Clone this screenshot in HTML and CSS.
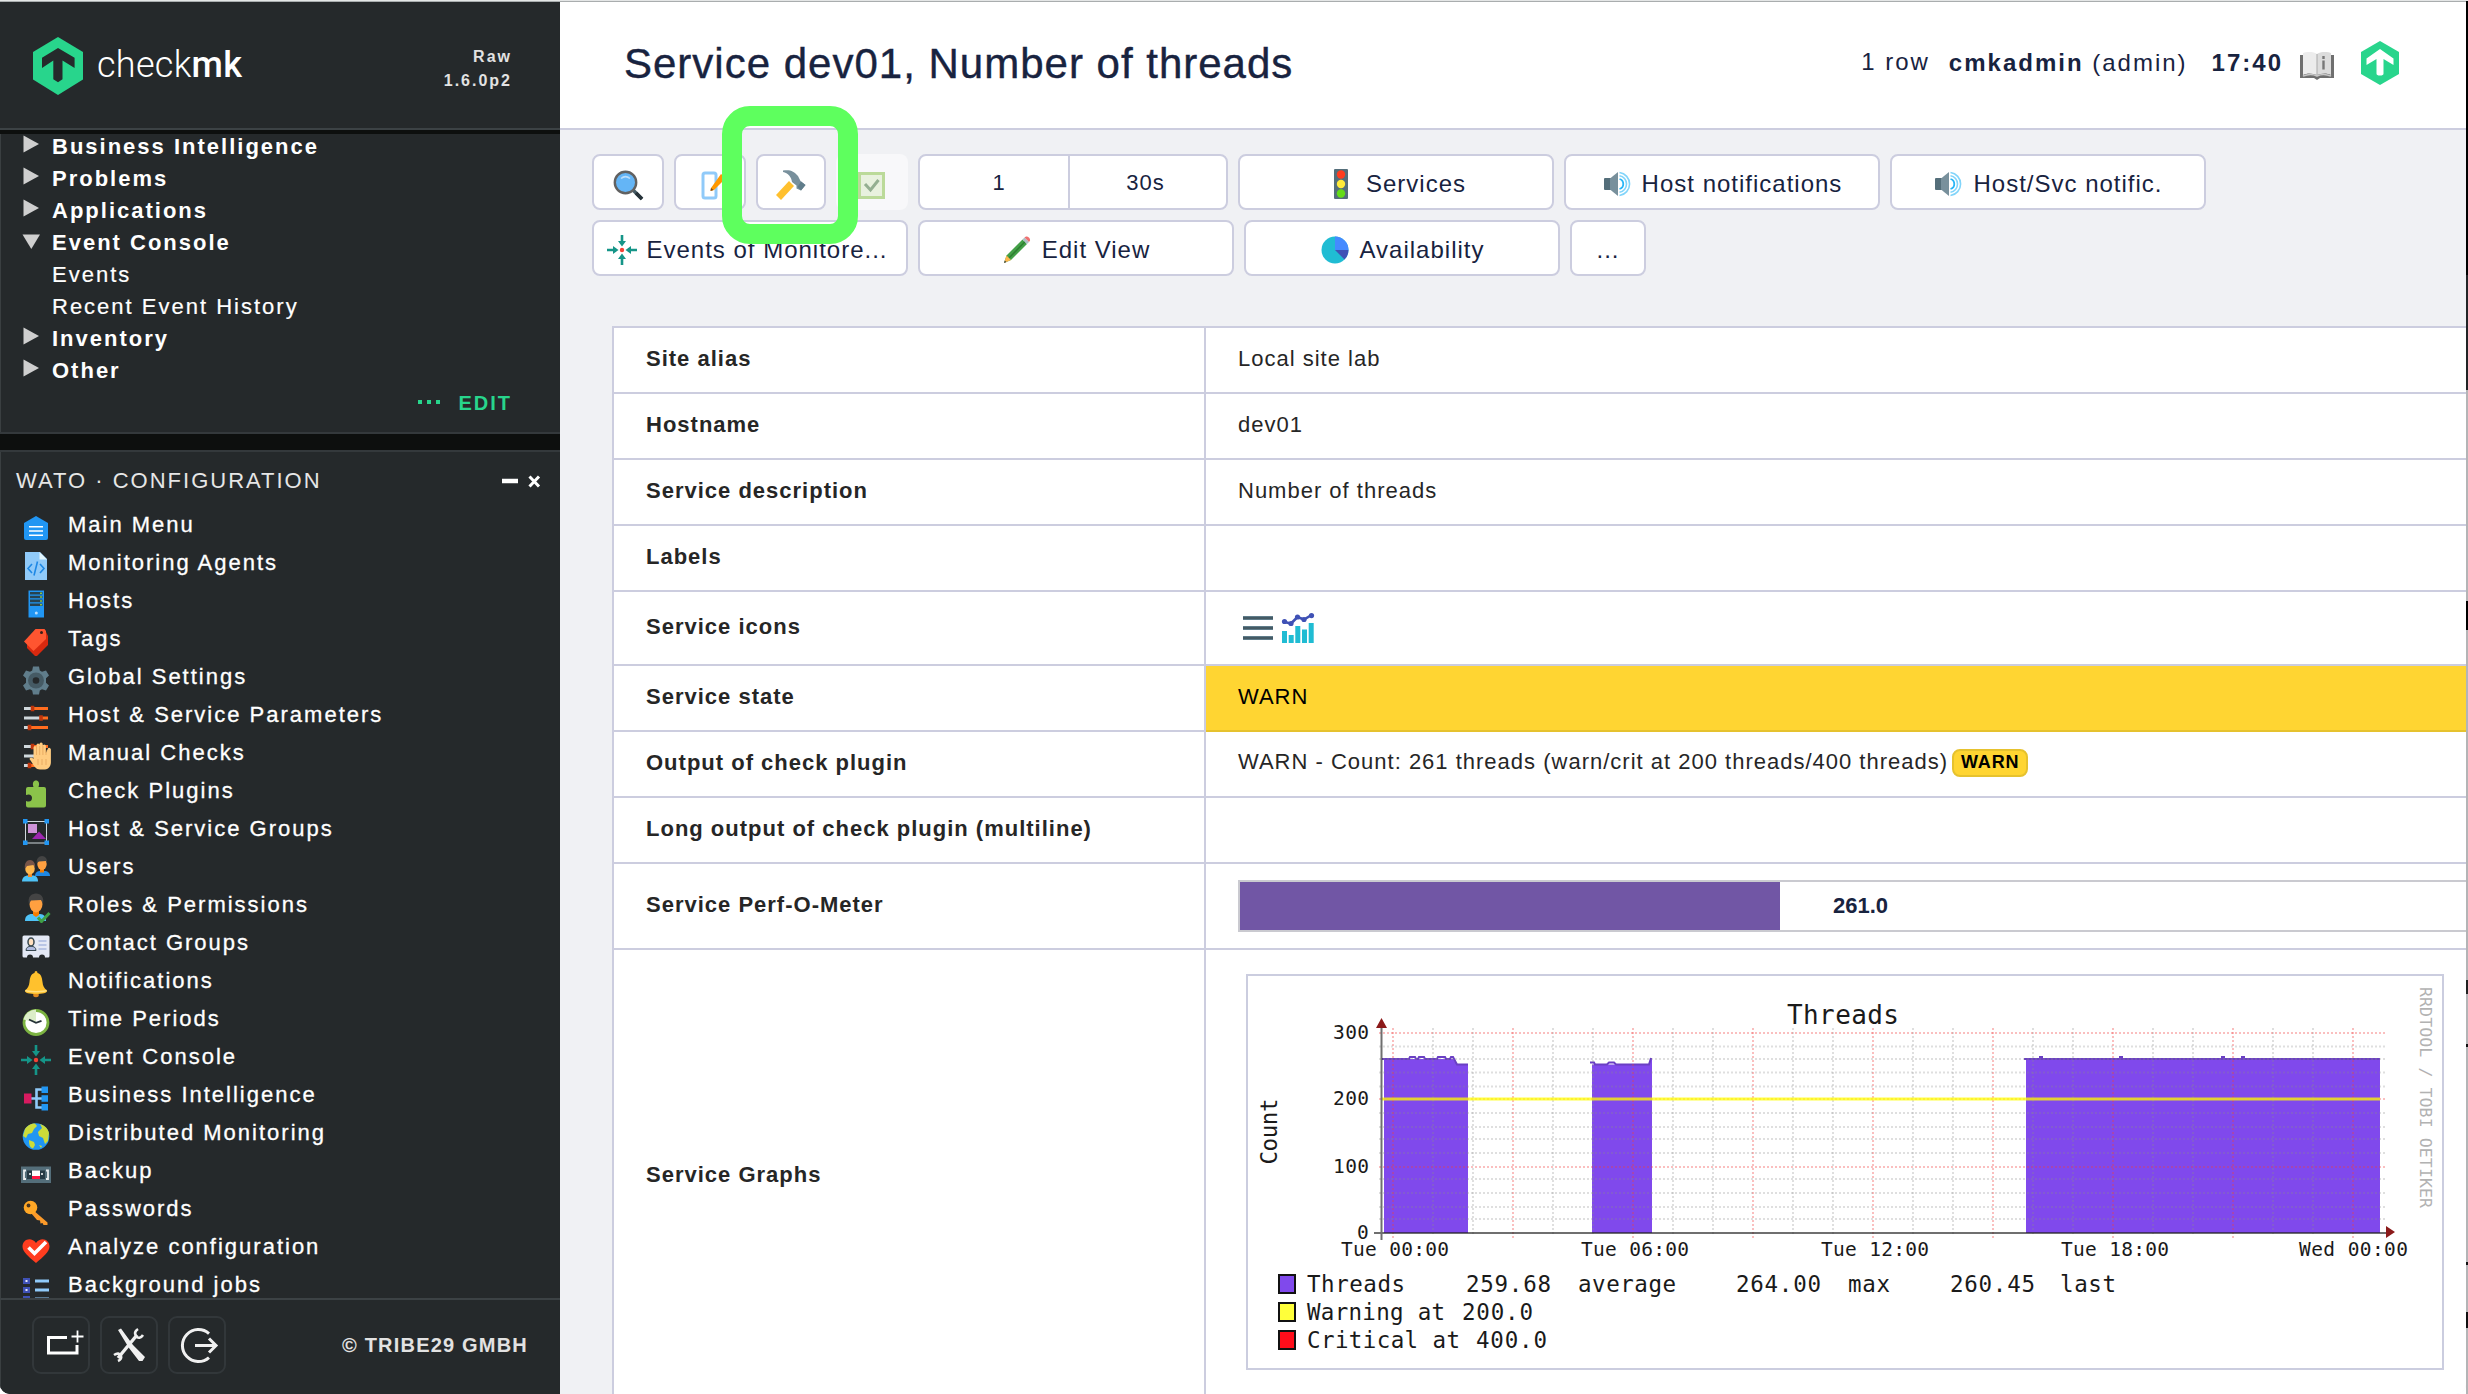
FILE: index.html
```html
<!DOCTYPE html>
<html lang="en">
<head>
<meta charset="utf-8">
<title>Service dev01, Number of threads</title>
<link rel="stylesheet" href="styles.css">
</head>
<body>
<svg class="defs" width="0" height="0">
  <defs>
    <symbol id="tri-right" viewBox="0 0 18 18"><path d="M1.5 0.5L17 9L1.5 17.5Z" fill="#cfcfcf"/></symbol>
    <symbol id="tri-down" viewBox="0 0 18 18"><path d="M0.5 3.5H18L9.3 18Z" fill="#cfcfcf"/></symbol>
    <symbol id="event" viewBox="0 0 30 30">
      <g fill="#159588"><path d="M13.7 0h2.6v6H19L15 11.5L11 6h2.700Z"/><path d="M13.700 30h2.600v-6H19L15 18.500L11 24h2.700Z"/><path d="M0 13.700v2.600h6V19L11.500 15L6 11v2.700Z"/><path d="M30 13.700v2.600h-6V19L18.500 15L24 11v2.700Z"/></g>
      <circle cx="15" cy="15" r="2.200" fill="#f44336"/>
    </symbol>
    <symbol id="speaker" viewBox="0 0 30 30">
      <rect x="2" y="9" width="8" height="12" rx="1" fill="#546e7a"/><path d="M8 9.500L16 3V27L8 20.500Z" fill="#78909c"/>
      <path d="M17.500 10a5.200 5.200 0 0 1 0 10" fill="none" stroke="#29b6f6" stroke-width="1.800"/>
      <path d="M17.500 6.800a8.300 8.300 0 0 1 0 16.400M17.500 3.500a11.600 11.600 0 0 1 0 23" fill="none" stroke="#81d4fa" stroke-width="1.600"/>
    </symbol>
    <symbol id="sliders" viewBox="0 0 30 30">
      <path d="M3 5.500h8M3 15h17M3 24.500h5" stroke="#cfd8dc" stroke-width="2.800"/>
      <path d="M12 5.500h15M21 15h6M9 24.500h18" stroke="#ff6d1f" stroke-width="2.800"/>
      <path d="M11.500 2.700v5.600M20 12.200v5.600M8.500 21.700v5.600" stroke="#bf360c" stroke-width="3.600"/>
    </symbol>
  </defs>
</svg>

<div class="app">
  <aside class="sidebar">
    <header class="brand">
      <svg class="brand-logo" width="50" height="58" viewBox="0 0 50 58"><path d="M25 0L50 15V42.500L25 58L0 42.500V15Z" fill="#28d58c"/><path d="M25 11L41.600 20.700V31L29.500 23.500V42.300L25 45.300L20.300 42.300V23.500L9 31V20.700Z" fill="#25292b"/></svg>
      <svg class="brand-name" width="150" height="44" viewBox="0 0 150 44"><text x="1" y="35" textLength="145" lengthAdjust="spacing">check<tspan class="brand-mk">mk</tspan></text></svg>
      <div class="edition">Raw<br>1.6.0p2</div>
    </header>

    <section class="snapin views">
      <ul class="tree">
        <li><svg><use href="#tri-right"/></svg>Business Intelligence</li>
        <li><svg><use href="#tri-right"/></svg>Problems</li>
        <li><svg><use href="#tri-right"/></svg>Applications</li>
        <li><svg><use href="#tri-down"/></svg>Event Console</li>
        <li class="leaf">Events</li>
        <li class="leaf">Recent Event History</li>
        <li><svg><use href="#tri-right"/></svg>Inventory</li>
        <li><svg><use href="#tri-right"/></svg>Other</li>
      </ul>
      <div class="edit"><svg width="22" height="6" viewBox="0 0 22 6"><path d="M0 1h4v4h-4zM9 1h4v4h-4zM18 1h4v4h-4z" fill="#28d58c"/></svg>EDIT</div>
    </section>

    <section class="snapin wato">
      <div class="snapin-head"><span>WATO · CONFIGURATION</span>
        <svg width="40" height="16" viewBox="0 0 40 16"><path d="M1 8h16" stroke="#fff" stroke-width="4.500"/><path d="M28.500 3.500l9.500 10M38 3.500l-9.500 10" stroke="#fff" stroke-width="3"/></svg>
      </div>
      <ul class="menu">
        <li><svg viewBox="0 0 30 30"><path d="M15 3L27 10V25a2 2 0 0 1-2 2H5a2 2 0 0 1-2-2V10Z" fill="#2196f3"/><path d="M8 13.800h14M8 18h14M8 22.200h14" stroke="#fff" stroke-width="1.400"/></svg>Main Menu</li>
        <li><svg viewBox="0 0 30 30"><path d="M4 1H19L26 8V29H4Z" fill="#90caf9"/><path d="M18.500 1L26 8.500H18.500Z" fill="#e1f5fe"/><path d="M11 13l-4 4.500L11 22M19 13l4 4.500L19 22M16.500 10.500l-3.500 14" fill="none" stroke="#1e88e5" stroke-width="1.600"/></svg>Monitoring Agents</li>
        <li><svg viewBox="0 0 30 30"><rect x="7.500" y="1.500" width="15.500" height="27" fill="#2196f3"/><path d="M9 4.200h12.500M9 8h12.500M9 11.900h12.500M9 15.800h12.500" stroke="#27424f" stroke-width="2.600"/><path d="M19 4.200h2M19 8h2M19 11.900h2M19 15.800h2" stroke="#8bc34a" stroke-width="1.500"/><circle cx="15.300" cy="24" r="1.500" fill="#bbdefb"/></svg>Hosts</li>
        <li><svg viewBox="0 0 30 30"><path d="M6 17L25 5L27 9V18L16 29H14L6 21Z" fill="#d9290f"/><path d="M14.500 2H23.500L25 4V12L12.500 24L3 14.500Z" fill="#ff5530"/><circle cx="20.500" cy="5.500" r="1.500" fill="#3a1d18"/></svg>Tags</li>
        <li><svg viewBox="0 0 30 30"><path d="M12 1.500h6l.8 4 2.200 1.300L25 5.500l3 5-3 2.800v4.400l3 2.800-3 5-4-1.300-2.200 1.300-.8 4h-6l-.8-4L9 24.200l-4 1.300-3-5 3-2.800v-4.400l-3-2.800 3-5 4 1.300 2.200-1.300Z" fill="#607d8b"/><circle cx="15" cy="15.500" r="8" fill="#455a64"/><circle cx="15" cy="15.500" r="3.300" fill="#25292b"/></svg>Global Settings</li>
        <li><svg><use href="#sliders"/></svg>Host &amp; Service Parameters</li>
        <li><svg viewBox="0 0 30 30"><use href="#sliders"/><path d="M12.500 18V6.500a1.500 1.500 0 0 1 3 0V4a1.500 1.500 0 0 1 3 0V3a1.500 1.500 0 0 1 3.200 0V5a1.500 1.500 0 0 1 3.200 0V12l2 -4.500a1.700 1.700 0 0 1 3 .7V21c0 4-2 7-6 7.500H19c-5 0-6.500-5-10.500-10.500c.5-2 3-1.500 4 0Z" fill="#ffcc80"/><path d="M15.500 6v8M18.700 5v9M21.900 5v9M25 9v5M17 18v6M21 18v6M25 18v6" stroke="#e5a55a" stroke-width=".8"/></svg>Manual Checks</li>
        <li><svg viewBox="0 0 30 30"><path d="M7 8h5.500C11 4 12.500 1.500 15 1.500S19 4 17.500 8H23a2 2 0 0 1 2 2V26.500a2 2 0 0 1-2 2H7a2 2 0 0 1-2-2V22c4.500 1.500 6-.5 6-3.200S8.500 14.500 5 16V10a2 2 0 0 1 2-2Z" fill="#8bc34a"/></svg>Check Plugins</li>
        <li><svg viewBox="0 0 30 30"><rect x="4.500" y="4.500" width="21" height="21.500" fill="none" stroke="#cfd8dc"/><rect x="7" y="7" width="9" height="9" fill="#ce93d8"/><path d="M11 22L18 14.500L25 22Z" fill="#9c27b0"/><path d="M2 2h4.500v4.500h-4.500zM23.500 2h4.500v4.500h-4.500zM2 23.500h4.500v4.500h-4.500zM23.500 23.500h4.500v4.500h-4.500z" fill="#2196f3"/></svg>Host &amp; Service Groups</li>
        <li><svg viewBox="0 0 30 30"><path d="M14 21c0-4 3-5 5-5h4c4 0 6 2 6 5Z" fill="#1e88e5"/><rect x="19" y="12" width="4" height="5.500" fill="#f57c00"/><ellipse cx="21" cy="9" rx="4.700" ry="6" fill="#ffa040"/><path d="M15.800 8C15 4 18 1 21 1s6 3 5 7.500L25 6L18 6.500Z" fill="#444"/><path d="M1 26.500c0-4 3-6 6-6h5c3 0 5 2 5 6Z" fill="#4fc3f7"/><rect x="7" y="17" width="4" height="5" fill="#ef8a2a"/><ellipse cx="9" cy="13.500" rx="4.800" ry="6" fill="#ffb74d"/><path d="M4 14C3 8 6 5 9 5s6 3 5 9L12.500 10L6 11Z" fill="#795548"/></svg>Users</li>
        <li><svg viewBox="0 0 30 30"><path d="M4 28c0-5 3-7 7-7h8c4 0 6 3 6 7Z" fill="#4fc3f7"/><path d="M12 17h6v5l-3 2-3-2Z" fill="#f57c00"/><ellipse cx="15" cy="11" rx="6.500" ry="8.500" fill="#ffa040"/><path d="M8 11C6.500 4 10 .5 15 .5s8.500 4 7 10.500L20 7L10 7.500Z" fill="#444"/><path d="M17 24.500l3.500 4L28.500 20" fill="none" stroke="#3f9f46" stroke-width="3"/></svg>Roles &amp; Permissions</li>
        <li><svg viewBox="0 0 30 30"><path d="M3 4.500H27A1.500 1.500 0 0 1 28.500 6V25a1.500 1.500 0 0 1-1.500 1.500H24a3 3 0 0 0-6 0H12a3 3 0 0 0-6 0H3A1.500 1.500 0 0 1 1.500 25V6A1.500 1.500 0 0 1 3 4.500Z" fill="#e4e9f5"/><path d="M5 19.500c0-3 2-4 5-4.500 3 .5 5 1.500 5 4.500Z" fill="#b0bce0" stroke="#37474f"/><ellipse cx="10" cy="11" rx="3" ry="4" fill="#ffe0c0" stroke="#37474f" stroke-width="1.500"/><path d="M17.500 10h8M17.500 14h8M17.500 18h8" stroke="#a9b9e0" stroke-width="1.400"/></svg>Contact Groups</li>
        <li><svg viewBox="0 0 30 30"><ellipse cx="15" cy="26" rx="2.800" ry="2.200" fill="#e08a20"/><path d="M13.500 4a1.500 2 0 0 1 3 0c4 1 4.500 5 5 9 .4 4 1.500 6 4.500 8.500 1 2.500-5 3.500-11 3.500S3 24 4 21.500C7 19 8 17 8.500 13c.5-4 1-8 5-9Z" fill="#ffc12d"/><path d="M4.500 21.500c4 1.500 17 1.500 21 0" fill="none" stroke="#ffe082" stroke-width="1.500"/></svg>Notifications</li>
        <li><svg viewBox="0 0 30 30"><circle cx="15" cy="15.500" r="12" fill="#fff" stroke="#7cb342" stroke-width="2.800"/><path d="M15 15.500V2.500A13 13 0 0 0 2.500 12.500Z" fill="#dcedc8"/><path d="M8 12.500l7 3.300 5.500-2" fill="none" stroke="#263238" stroke-width="1.800"/></svg>Time Periods</li>
        <li><svg><use href="#event"/></svg>Event Console</li>
        <li><svg viewBox="0 0 30 30"><path d="M8 15.500h8M24 6.500H15.500V24.500H24M15 15.500h9" fill="none" stroke="#90caf9" stroke-width="2.600"/><rect x="3" y="10.500" width="7.500" height="10" fill="#d81b60"/><path d="M20.500 3.500h6.500v6.500h-6.500zM20.500 12.200h6.500v6.500h-6.500zM20.500 21h6.500v6.500h-6.500z" fill="#2196f3"/></svg>Business Intelligence</li>
        <li><svg viewBox="0 0 30 30"><circle cx="15" cy="15.500" r="13.300" fill="#2196f3"/><path d="M4 8c3-4 6-5.500 10-5.500l2 2.500-3 3-2 4-4 1-2 4-3-2ZM19 3c5 1.500 8 5 9 9l-1 8-3 3-2-6-4-2-1-4 4-4ZM8 19l5 2 1 3-2 3.500c-3-1-4-3-4-8.500ZM18 24l3 1-1 2Z" fill="#cddc39"/></svg>Distributed Monitoring</li>
        <li><svg viewBox="0 0 30 30"><rect y="7.500" width="30" height="16.500" fill="#546e7a"/><rect x="6" y="11.500" width="18" height="8.500" fill="#263a45"/><path d="M5 11.500H3V20h2M25 11.500h2V20h-2" fill="none" stroke="#eceff1" stroke-width="1.800"/><rect x="11" y="11.500" width="8" height="6" fill="#fff"/><rect x="11" y="17" width="8" height="3" fill="#ff1744"/><path d="M8 15h2M20 15h2" stroke="#fff" stroke-width="1.500"/></svg>Backup</li>
        <li><svg viewBox="0 0 30 30"><path d="M12 13L26.500 25.500V28H22.500L21.500 26l-2 .5-.5-3-3-.5L10 16Z" fill="#fb9a2a"/><circle cx="9.500" cy="10.500" r="6.800" fill="#ffa726"/><circle cx="7.500" cy="8.500" r="1.900" fill="#4a3520"/></svg>Passwords</li>
        <li><svg viewBox="0 0 30 30"><path d="M15 28C8 22 1.500 17 1.500 11.500C1.500 4 10.500 1.500 15 8C19.500 1.500 28.500 4 28.500 11.500C28.500 17 22 22 15 28Z" fill="#ff3d1f"/><path d="M7.500 12.500l6 6L25 7" fill="none" stroke="#fff" stroke-width="3.600"/></svg>Analyze configuration</li>
        <li><svg viewBox="0 0 30 30"><path d="M2 5h7v6h-7zM2 14h7v6h-7zM2 23h7v6h-7z" fill="#3f51b5"/><path d="M4.500 7h2v2h-2zM4.500 16h2v2h-2zM4.500 25h2v2h-2z" fill="#e8eaf6"/><path d="M14 8h14M14 17h14M14 26h14" stroke="#90caf9" stroke-width="2.800"/></svg>Background jobs</li>
      </ul>
    </section>

    <footer class="side-foot">
      <span class="foot-btn"><svg width="40" height="40" viewBox="0 0 40 40"><path d="M25 12.500H6.500V28H35V20" fill="none" stroke="#fff" stroke-width="3"/><path d="M35.500 5.500v12M29.500 11.500h12" stroke="#fff" stroke-width="1.800"/></svg></span>
      <span class="foot-btn"><svg width="40" height="40" viewBox="0 0 40 40"><path d="M8 5L11 3.500L23 20L35 32L32.500 36H29L19 23Z" fill="#f0f0f0"/><path d="M8 33L27 10" stroke="#f0f0f0" stroke-width="3.400"/><path d="M28 4c-3 2-4 4-2 7s5 2 7-1M4 30c3-2 6-2 7 1s-1 4-3 5" fill="none" stroke="#f0f0f0" stroke-width="2.600"/></svg></span>
      <span class="foot-btn"><svg width="40" height="40" viewBox="0 0 40 40"><path d="M31 8.500A16 16 0 1 0 31 32.500" fill="none" stroke="#f0f0f0" stroke-width="3"/><path d="M17 20.500H37M31 13.500L38 20.500L31 27.500" fill="none" stroke="#f0f0f0" stroke-width="3"/></svg></span>
      <span class="copy">© TRIBE29 GMBH</span>
    </footer>
  </aside>

  <main class="content">
    <header class="page-head">
      <h1>Service dev01, Number of threads</h1>
      <div class="head-info">
        <span class="rows">1 row</span>
        <span class="user"><b>cmkadmin</b> (admin)</span>
        <b class="time">17:40</b>
        <svg class="book" width="34" height="28" viewBox="0 0 34 28"><path d="M0 3H34V26H20l-3 2-3-2H0Z" fill="#6f6f6f"/><path d="M3 1C9-1 14 0 17 2V23C12 21 7 21 3 23Z" fill="#ececec"/><path d="M31 1C25-1 20 0 17 2V23C22 21 27 21 31 23Z" fill="#dcdcdc"/><path d="M17 2v22" stroke="#aaa"/><path d="M3 24c5-2 10-2 14 0 4-2 9-2 14 0" fill="none" stroke="#c8c8c8" stroke-width="1.500"/><path d="M23.500 4v3M23.500 8.500v9" stroke="#777" stroke-width="2.400"/></svg>
        <svg class="mark" width="38" height="44" viewBox="0 0 38 44"><path d="M19 0L38 11V33L19 44L0 33V11Z" fill="#28d58c"/><path d="M19 8L32.500 17.500V24L22.500 18V32.500Q22.500 34.500 19 34.500T15.500 32.500V18L5.500 24V17.500Z" fill="#fff"/></svg>
      </div>
    </header>

    <div class="toolbar">
      <div class="bar">
        <div class="icons">
          <span class="btn icon-btn"><svg viewBox="0 0 30 30"><path d="M20 20L29 29" stroke="#455a64" stroke-width="3.600"/><path d="M23 23L29 29" stroke="#263238" stroke-width="3.600"/><circle cx="12.500" cy="12.500" r="10.700" fill="#64b5f6" stroke="#616161" stroke-width="2.400"/><path d="M8 8.500c3-2.500 6-2.500 9 0" fill="none" stroke="#bbdefb" stroke-width="1.600"/></svg></span>
          <span class="btn icon-btn"><svg viewBox="0 0 30 30"><rect x="8" y="3" width="13" height="25" rx="2" fill="#fff" stroke="#90caf9" stroke-width="3"/><path d="M16 18L26 4L31 8L19 20L15.500 21Z" fill="#ff9800"/><path d="M15.500 21l.5-3 2.500 2Z" fill="#7a4a20"/></svg></span>
          <span class="btn icon-btn hammer"><svg viewBox="0 0 30 30"><path d="M0 25L13 11L18 16L5 30Z" fill="#ffc02e"/><path d="M7 0.500C14-.5 18 1 22 6L24.500 11L29.500 15L25 20.500L20.500 18.500V15.500L16 12C15.500 7 12 3 7 2Z" fill="#78909c"/><path d="M25 11.500L29.500 15L25 20.500L21.500 17Z" fill="#607d8b"/></svg></span>
          <span class="btn icon-btn disabled"><svg viewBox="0 0 30 30"><rect x="2.500" y="3.500" width="24" height="24" fill="#dcedc8" stroke="#8bc34a" stroke-width="3"/><path d="M8 14l5.500 6L21.500 10" fill="none" stroke="#43743c" stroke-width="3"/></svg></span>
        </div>
        <div class="btn group"><span>1</span><span>30s</span></div>
        <span class="btn wide"><svg viewBox="0 0 30 30"><rect x="8" y="0" width="14" height="30" rx="1" fill="#546e7a"/><circle cx="15" cy="5.500" r="4.200" fill="#ff3d1f"/><circle cx="15" cy="15" r="4.200" fill="#ffeb3b"/><circle cx="15" cy="24.500" r="4.200" fill="#64dd17"/></svg>Services</span>
        <span class="btn wide"><svg><use href="#speaker"/></svg>Host notifications</span>
        <span class="btn wide"><svg><use href="#speaker"/></svg>Host/Svc notific.</span>
      </div>
      <div class="bar">
        <span class="btn wide events"><svg><use href="#event"/></svg>Events of Monitore...</span>
        <span class="btn wide"><svg viewBox="0 0 30 30"><path d="M4.500 20.500L20.500 4.500L25 9L9 25L2 28Z" fill="#43a047"/><path d="M7 23L23 6.800" stroke="#2e7d32" stroke-width="1.500"/><path d="M4.500 20.500L9 25L2 28Z" fill="#ffb74d"/><path d="M2.800 25.500L4.500 27L2 28Z" fill="#37474f"/><path d="M20.500 4.500L22.500 2.500L27 7L25 9Z" fill="#b0bec5"/><path d="M22.500 2.500l1.500-1c2-.5 4.500 2 4 4l-1 1.500Z" fill="#ef7070"/></svg>Edit View</span>
        <span class="btn wide"><svg viewBox="0 0 30 30"><circle cx="15" cy="15" r="13.500" fill="#20bcd3"/><path d="M15 15V1.500A13.500 13.500 0 0 1 28.500 15Z" fill="#448aff"/><path d="M15 15H28.500A13.500 13.500 0 0 1 24.500 24.500Z" fill="#3f51b5"/></svg>Availability</span>
        <span class="btn more">...</span>
      </div>
      <div class="highlight"></div>
    </div>

    <table class="detail">
      <tr><th>Site alias</th><td>Local site lab</td></tr>
      <tr><th>Hostname</th><td>dev01</td></tr>
      <tr><th>Service description</th><td>Number of threads</td></tr>
      <tr><th>Labels</th><td></td></tr>
      <tr class="row-icons"><th>Service icons</th><td><svg width="80" height="32" viewBox="0 0 80 32"><path d="M5 5h30M5 15h30M5 25h30" stroke="#607d8b" stroke-width="4"/><path d="M5 5h30M5 15h30M5 25h30" stroke="#455a64" stroke-width="2.200"/><path d="M44 18h5v12h-5zM50.700 22h5v8h-5zM57.300 13h5v17h-5zM64 16.500h5v13.500h-5zM70.700 10h5v20h-5z" fill="#20bcd3"/><path d="M46.500 9l6.500 1.500L59.500 4L66 6.500L73.500 2" fill="none" stroke="#3f51b5" stroke-width="2.600"/><g fill="#3f51b5"><circle cx="46.500" cy="8.500" r="2.600"/><circle cx="53" cy="10.500" r="2.600"/><circle cx="59.500" cy="4" r="2.600"/><circle cx="66" cy="6.500" r="2.600"/><circle cx="73.500" cy="2.600" r="2.600"/></g></svg></td></tr>
      <tr><th>Service state</th><td class="warn">WARN</td></tr>
      <tr><th>Output of check plugin</th><td>WARN - Count: 261 threads (warn/crit at 200 threads/400 threads)<span class="badge">WARN</span></td></tr>
      <tr><th>Long output of check plugin (multiline)</th><td></td></tr>
      <tr class="row-perf"><th>Service Perf-O-Meter</th><td><div class="perf"><i></i><b>261.0</b></div></td></tr>
      <tr class="row-graph"><th>Service Graphs</th><td>
        <svg class="graph" width="1198" height="396" viewBox="1246 974 1198 396">
          <rect x="1247" y="975" width="1196" height="394" fill="#fff" stroke="#cbcddf" stroke-width="2"/>
          <g fill="#8049ec">
            <path d="M1384 1233V1059H1453L1457 1064.500H1468V1233Z"/>
            <path d="M1592 1233V1064.500H1649L1651 1058H1652V1233Z"/>
            <path d="M2026 1233V1059H2380V1233Z"/>
          </g>
          <g fill="none" stroke="#6a3fc4" stroke-width="2">
            <path d="M1382 1059H1409L1410 1057H1415L1416 1059H1418L1419 1057H1424L1425 1059H1437L1438 1057H1445L1446 1059H1450L1451 1057H1453L1457 1064.500H1468"/>
            <path d="M1590 1062.500h4L1595 1064.500H1607L1609 1062.500H1614L1616 1064.500H1649L1651 1058"/>
            <path d="M2024 1059H2380M2039 1057h4M2119 1057h4M2221 1057h4M2241 1057h4"/>
          </g>
          <g stroke="#8c8c8c" stroke-opacity=".28" stroke-width="2" stroke-dasharray="2 2">
            <path d="M1379 1046.500H2386M1379 1059H2386M1379 1072.500H2386M1379 1086.500H2386M1379 1113H2386M1379 1127H2386M1379 1139H2386M1379 1153H2386M1379 1179H2386M1379 1193H2386M1379 1207H2386M1379 1219H2386"/>
            <path d="M1433 1028V1236M1473 1028V1236M1553 1028V1236M1593 1028V1236M1673 1028V1236M1713 1028V1236M1793 1028V1236M1833 1028V1236M1913 1028V1236M1953 1028V1236M2033 1028V1236M2073 1028V1236M2153 1028V1236M2193 1028V1236M2273 1028V1236M2313 1028V1236"/>
          </g>
          <g stroke="#f03c3c" stroke-opacity=".33" stroke-width="2" stroke-dasharray="2 2">
            <path d="M1379 1033H2386M1379 1099H2386M1379 1167H2386"/>
            <path d="M1393 1028V1238M1513 1028V1238M1633 1028V1238M1753 1028V1238M1873 1028V1238M1993 1028V1238M2113 1028V1238M2233 1028V1238M2353 1028V1238"/>
          </g>
          <path d="M1382 1099H2380" stroke="#ffff00" stroke-opacity=".74" stroke-width="3"/>
          <path d="M1381.500 1026V1240M1374 1233H2388" stroke="#222" stroke-opacity=".65" stroke-width="2"/>
          <path d="M1381.500 1018L1387 1028H1376ZM2395 1232L2386 1226V1238Z" fill="#8b1a1a"/>
          <g class="g-text">
            <text x="1787" y="1023.500" font-size="26" textLength="112">Threads</text>
            <g font-size="19.500">
              <text x="1333" y="1039" textLength="36">300</text>
              <text x="1333" y="1105" textLength="36">200</text>
              <text x="1333" y="1173" textLength="36">100</text>
              <text x="1357" y="1239" textLength="12">0</text>
              <text x="1341" y="1256" textLength="108">Tue 00:00</text>
              <text x="1581" y="1256" textLength="108">Tue 06:00</text>
              <text x="1821" y="1256" textLength="108">Tue 12:00</text>
              <text x="2061" y="1256" textLength="108">Tue 18:00</text>
              <text x="2299" y="1256" textLength="109">Wed 00:00</text>
            </g>
            <g font-size="22.500">
              <text transform="translate(1276.500 1164.500) rotate(-90)" textLength="66">Count</text>
              <text x="1307" y="1292" textLength="98">Threads</text>
              <text x="1466" y="1292" textLength="85">259.68</text>
              <text x="1578" y="1292" textLength="98">average</text>
              <text x="1736" y="1292" textLength="85">264.00</text>
              <text x="1848" y="1292" textLength="42">max</text>
              <text x="1950" y="1292" textLength="85">260.45</text>
              <text x="2060" y="1292" textLength="56">last</text>
              <text x="1307" y="1320" textLength="138">Warning at</text>
              <text x="1462" y="1320" textLength="71">200.0</text>
              <text x="1307" y="1348" textLength="153">Critical at</text>
              <text x="1476" y="1348" textLength="71">400.0</text>
            </g>
            <text class="g-mark" transform="translate(2420 987) rotate(90)" font-size="16.500" textLength="221">RRDTOOL / TOBI OETIKER</text>
          </g>
          <g stroke="#111" stroke-width="2"><rect x="1279" y="1275" width="16" height="18" fill="#8049ec"/><rect x="1279" y="1303" width="16" height="18" fill="#ffff3a"/><rect x="1279" y="1331" width="16" height="18" fill="#ff0d1a"/></g>
        </svg>
      </td></tr>
    </table>
  </main>
  <div class="edge"></div>
</div>
</body>
</html>
```

FILE: styles.css
```css
* { box-sizing: border-box; }
body {
  margin: 0;
  font-family: "Liberation Sans", Arial, sans-serif;
  font-size: 22px;
  letter-spacing: 1px;
  color: #262626;
  background: #fff;
  overflow: hidden;
}
ul { list-style: none; margin: 0; padding: 0; }
svg { display: block; flex: none; }
.defs { position: absolute; }

.app {
  display: flex;
  width: 2468px;
  height: 1394px;
  border-top: 1px solid #e4e6e6;
  overflow: hidden;
}

/* Sidebar */
.sidebar {
  display: flex;
  flex-direction: column;
  width: 560px;
  height: 1393px;
  flex: none;
  color: #fff;
  background: #0d0f0e;
  border-top: 1px solid #a9adae;
  border-bottom-left-radius: 10px;
  letter-spacing: 2px;
  overflow: hidden;
}
.brand {
  display: flex;
  align-items: flex-start;
  height: 128px;
  flex: none;
  padding: 35px 48px 0 33px;
  background: #25292b;
  border-bottom: 2px solid #3c4245;
}
.brand-name { margin: 5px 0 0 13px; font: 300 36px Roboto, sans-serif; fill: #fff; letter-spacing: 0; }
.brand-mk { font-weight: 500; }
.edition {
  margin-left: auto;
  margin-top: 8px;
  font: bold 16px/24px "Liberation Sans", Arial, sans-serif;
  text-align: right;
  color: #e2e2e2;
}
.snapin { background: #25292b; box-shadow: inset 1px 0 #3a3f41; }
.views { height: 300px; flex: none; margin-top: 4px; border-bottom: 2px solid #34393c; }
.tree { margin-top: -4px; line-height: 34px; font-weight: bold; }
.tree li { display: flex; height: 32px; padding-left: 22px; }
.tree svg { width: 18px; height: 18px; margin: 5px 12px 0 0; }
.tree .leaf { padding-left: 52px; font-weight: normal; -webkit-text-stroke: 0.2px #fff; }
.edit {
  display: flex;
  justify-content: flex-end;
  align-items: center;
  gap: 18px;
  height: 32px;
  padding: 2px 48px 0 0;
  font-size: 20px;
  font-weight: bold;
  color: #28d58c;
}
.edit svg { margin-top: -2px; }
.wato { flex: 1; min-height: 0; margin-top: 16px; border-top: 2px solid #34393c; overflow: hidden; }
.snapin-head {
  display: flex;
  justify-content: space-between;
  align-items: center;
  height: 54px;
  padding: 3px 19px 0 16px;
  letter-spacing: 2px;
  color: #e6e6e6;
}
.menu { -webkit-text-stroke: 0.3px #fff; }
.menu li { display: flex; height: 38px; padding-left: 21px; line-height: 38px; }
.menu svg { width: 30px; height: 30px; margin: 7px 17px 0 0; -webkit-text-stroke: 0; }
.side-foot {
  display: flex;
  align-items: flex-start;
  gap: 10px;
  height: 96px;
  flex: none;
  padding: 16px 32px 0;
  background: #25292b;
  border-top: 2px solid #3c4245;
  box-shadow: inset 1px 0 #3a3f41;
}
.foot-btn {
  display: flex;
  align-items: center;
  justify-content: center;
  width: 58px;
  height: 58px;
  border: 2px solid #32373a;
  border-radius: 9px;
}
.foot-btn svg { overflow: visible; margin-left: 2px; }
.copy { margin-left: auto; font-size: 20px; font-weight: bold; line-height: 58px; letter-spacing: 1.2px; color: #e2e2e2; }

/* Main area */
.content { width: 1906px; flex: none; background: #f0f1f4; border-top: 1px solid #a9adae; overflow: hidden; height: 1393px; border-bottom-right-radius: 10px; }
.page-head {
  display: flex;
  justify-content: space-between;
  height: 128px;
  padding: 0 67px 0 64px;
  color: #18233f;
  background: #fff;
  border-bottom: 2px solid #cccddf;
}
h1 { margin: 0; font-size: 42px; font-weight: normal; line-height: 124px; letter-spacing: 1px; -webkit-text-stroke: 0.4px #18233f; }
.head-info { display: flex; font-size: 24px; line-height: 122px; letter-spacing: 2px; }
.rows { margin-right: 19px; line-height: 120px; }
.user { margin-right: 24px; }
.book { margin: 50px 27px 0 17px; }
.mark { margin-top: 39px; }

.toolbar { position: relative; display: flex; flex-direction: column; gap: 10px; padding: 24px 32px 50px; }
.bar { display: flex; gap: 10px; }
.icons { display: flex; justify-content: space-between; width: 316px; }
.btn {
  display: flex;
  align-items: center;
  justify-content: center;
  height: 56px;
  padding-top: 3px;
  font-size: 24px;
  color: #18233f;
  background: #fff;
  border: 2px solid #cccddf;
  border-radius: 8px;
}
.btn svg { width: 30px; height: 30px; margin-top: 2px; overflow: visible; }
.icon-btn { width: 72px; }
.hammer { width: 70px; }
.disabled { background: rgba(255, 255, 255, 0.5); border-color: transparent; }
.disabled svg { opacity: 0.55; }
.wide { width: 316px; gap: 10px; }
.wide svg { margin-top: 0; }
.events { padding-right: 5px; gap: 9px; }
.group { width: 310px; padding: 0; justify-content: flex-start; align-items: stretch; font-size: 22px; line-height: 53px; }
.group span { width: 148px; text-align: center; padding-left: 10px; }
.group span + span { flex: 1; border-left: 2px solid #cccddf; padding: 0 5px 0 0; }
.more { width: 76px; }
.highlight {
  position: absolute;
  left: 162px;
  top: -24px;
  width: 136px;
  height: 138px;
  border: 20px solid #5eff5e;
  border-radius: 28px;
}

/* Service details */
.detail { width: 1854px; margin-left: 52px; border-collapse: separate; border-spacing: 0; table-layout: fixed; background: #fff; border-top: 2px solid #cccddf; border-left: 2px solid #cccddf; }
.detail th, .detail td { height: 66px; padding: 0 0 2px 32px; text-align: left; border-bottom: 2px solid #cccddf; white-space: nowrap; }
.detail th { width: 592px; border-right: 2px solid #cccddf; }
.detail .row-icons > * { height: 74px; }
.row-icons svg { margin-top: 3px; overflow: visible; }
.detail .warn { background: #ffd532; border-bottom-color: #e6c22e; color: #000; }
.badge {
  display: inline-block;
  height: 28px;
  margin-left: 4px;
  padding: 0 7px;
  font-size: 18px;
  font-weight: bold;
  line-height: 23px;
  letter-spacing: 0.8px;
  color: #000;
  background: #ffd532;
  border: 2px solid #e6c22e;
  border-radius: 8px;
  vertical-align: 1px;
}
.detail .row-perf > * { height: 86px; }
.perf { display: flex; align-items: center; height: 52px; margin-top: 2px; border: 2px solid #cacad0; border-right: 0; letter-spacing: 0; color: #18233f; }
.perf i { width: 540px; height: 48px; background: #7156a5; margin-right: 53px; }
.detail .row-graph > * { height: 453px; }
.detail .row-graph td { padding: 0 0 0 40px; vertical-align: top; }
.graph { margin-top: 24px; letter-spacing: 0; }
.g-text { font-family: "DejaVu Sans Mono", monospace; fill: #1a1a1a; white-space: pre; }
.g-mark { fill: #b2b2b2; }

/* Strip of the desktop beside the window */
.edge { width: 2px; background: linear-gradient(#000 274px, #222426 274px 389px, #b4b4b6 389px 600px, #000 600px 629px, #b4b4b6 629px 979px, #222 979px 993px, #b4b4b6 993px 1043px, #111 1043px 1046px, #b4b4b6 1046px 1261px, #111 1261px 1264px, #b4b4b6 1264px 1311px, #111 1311px 1327px, #b4b4b6 1327px); }
```
